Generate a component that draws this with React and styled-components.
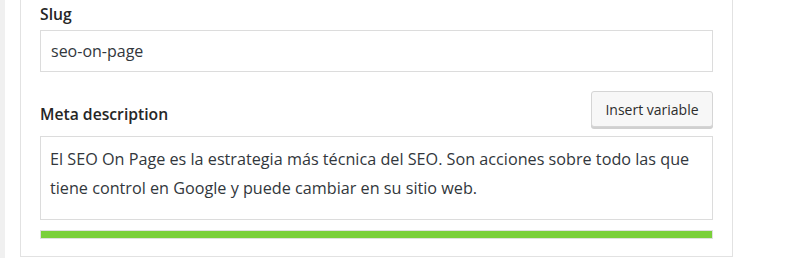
import React from 'react'
import styled, { createGlobalStyle } from 'styled-components'

const Global = createGlobalStyle`
  html, body {
    margin: 0;
    padding: 0;
    background: #fff;
  }
  body {
    font-family: "Open Sans", "Noto Sans", sans-serif;
    color: #1e1e1e;
  }
`

const Page = styled.div`
  display: flex;
  height: 258px;
  border-left: 5px solid #f0f0f0;
  padding-left: 15px;
  box-sizing: border-box;
`

const Panel = styled.section`
  width: 713px;
  height: 257px;
  box-sizing: border-box;
  border: 1px solid #e2e2e2;
  border-top: none;
  padding: 3px 19px 0 19px;
  display: flex;
  flex-direction: column;
`

const Label = styled.label`
  display: block;
  font-size: 15.7px;
  font-weight: 600;
  line-height: 22px;
  color: #262626;
  padding-bottom: ${p => p.$lift || 0}px;
`

const Field = styled.div`
  display: flex;
  flex-direction: column;
  gap: 5px;
  margin-bottom: ${p => p.$space || 0}px;
`

const Input = styled.div`
  height: 42px;
  box-sizing: border-box;
  border: 1px solid #dcdcdc;
  padding: 0 10px;
  display: flex;
  align-items: center;
  font-size: 16px;
  color: #32373c;
`

const FieldHead = styled.div`
  display: flex;
  justify-content: space-between;
  align-items: flex-end;
  margin-bottom: 9px;
`

const Button = styled.button`
  font-family: inherit;
  font-size: 14px;
  color: #2c2c2c;
  background: #f7f7f7;
  border: 1px solid #d5d5d5;
  border-radius: 3px;
  box-shadow: 0 2px 0 #d0d0d0;
  height: 36px;
  width: 122px;
  padding: 0;
  cursor: pointer;
`

const TextArea = styled.div`
  height: 84px;
  box-sizing: border-box;
  border: 1px solid #dcdcdc;
  padding: 8px 4px 8px 9px;
  font-size: 16.2px;
  line-height: 29px;
  color: #32373c;
`

const Progress = styled.div`
  margin-top: 10px;
  height: 9px;
  box-sizing: border-box;
  border: 1px solid #e0e0e0;
  background: #f3f3f3;
`

const Bar = styled.div`
  height: 100%;
  background: #7ad03a;
`

export default function App() {
  const score = 100
  return (
    <>
      <Global />
      <Page>
        <Panel>
          <Field $space={19}>
            <Label>Slug</Label>
            <Input>seo-on-page</Input>
          </Field>
          <FieldHead>
            <Label $lift={2}>Meta description</Label>
            <Button>Insert variable</Button>
          </FieldHead>
          <TextArea>
            El SEO On Page es la estrategia más técnica del SEO. Son acciones sobre todo las que tiene control en Google y puede cambiar en su sitio web.
          </TextArea>
          <Progress>
            <Bar style={{ width: `${score}%` }} />
          </Progress>
        </Panel>
      </Page>
    </>
  )
}
